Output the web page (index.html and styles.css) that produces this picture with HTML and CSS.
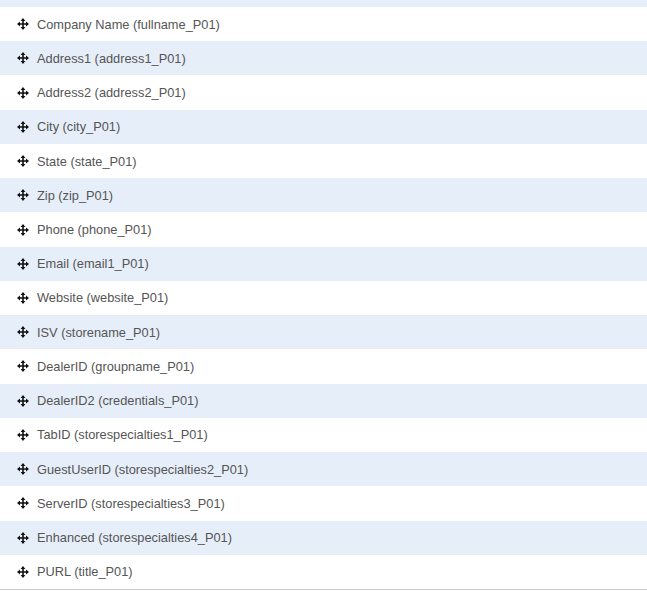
FILE: index.html
```html
<!DOCTYPE html>
<html>
<head>
<meta charset="utf-8">
<link rel="stylesheet" href="styles.css">
</head>
<body>
<div class="list">
  <div class="strip"></div>
  <div class="row"><svg class="ico" viewBox="0 0 12 12"><path d="M6 0L8.4 3H6.8V5.2H9V3.6L12 6L9 8.4V6.8H6.8V9H8.4L6 12L3.6 9H5.2V6.8H3V8.4L0 6L3 3.6V5.2H5.2V3H3.6Z"/></svg><span>Company Name (fullname_P01)</span></div>
  <div class="row"><svg class="ico" viewBox="0 0 12 12"><path d="M6 0L8.4 3H6.8V5.2H9V3.6L12 6L9 8.4V6.8H6.8V9H8.4L6 12L3.6 9H5.2V6.8H3V8.4L0 6L3 3.6V5.2H5.2V3H3.6Z"/></svg><span>Address1 (address1_P01)</span></div>
  <div class="row"><svg class="ico" viewBox="0 0 12 12"><path d="M6 0L8.4 3H6.8V5.2H9V3.6L12 6L9 8.4V6.8H6.8V9H8.4L6 12L3.6 9H5.2V6.8H3V8.4L0 6L3 3.6V5.2H5.2V3H3.6Z"/></svg><span>Address2 (address2_P01)</span></div>
  <div class="row"><svg class="ico" viewBox="0 0 12 12"><path d="M6 0L8.4 3H6.8V5.2H9V3.6L12 6L9 8.4V6.8H6.8V9H8.4L6 12L3.6 9H5.2V6.8H3V8.4L0 6L3 3.6V5.2H5.2V3H3.6Z"/></svg><span>City (city_P01)</span></div>
  <div class="row"><svg class="ico" viewBox="0 0 12 12"><path d="M6 0L8.4 3H6.8V5.2H9V3.6L12 6L9 8.4V6.8H6.8V9H8.4L6 12L3.6 9H5.2V6.8H3V8.4L0 6L3 3.6V5.2H5.2V3H3.6Z"/></svg><span>State (state_P01)</span></div>
  <div class="row"><svg class="ico" viewBox="0 0 12 12"><path d="M6 0L8.4 3H6.8V5.2H9V3.6L12 6L9 8.4V6.8H6.8V9H8.4L6 12L3.6 9H5.2V6.8H3V8.4L0 6L3 3.6V5.2H5.2V3H3.6Z"/></svg><span>Zip (zip_P01)</span></div>
  <div class="row"><svg class="ico" viewBox="0 0 12 12"><path d="M6 0L8.4 3H6.8V5.2H9V3.6L12 6L9 8.4V6.8H6.8V9H8.4L6 12L3.6 9H5.2V6.8H3V8.4L0 6L3 3.6V5.2H5.2V3H3.6Z"/></svg><span>Phone (phone_P01)</span></div>
  <div class="row"><svg class="ico" viewBox="0 0 12 12"><path d="M6 0L8.4 3H6.8V5.2H9V3.6L12 6L9 8.4V6.8H6.8V9H8.4L6 12L3.6 9H5.2V6.8H3V8.4L0 6L3 3.6V5.2H5.2V3H3.6Z"/></svg><span>Email (email1_P01)</span></div>
  <div class="row"><svg class="ico" viewBox="0 0 12 12"><path d="M6 0L8.4 3H6.8V5.2H9V3.6L12 6L9 8.4V6.8H6.8V9H8.4L6 12L3.6 9H5.2V6.8H3V8.4L0 6L3 3.6V5.2H5.2V3H3.6Z"/></svg><span>Website (website_P01)</span></div>
  <div class="row"><svg class="ico" viewBox="0 0 12 12"><path d="M6 0L8.4 3H6.8V5.2H9V3.6L12 6L9 8.4V6.8H6.8V9H8.4L6 12L3.6 9H5.2V6.8H3V8.4L0 6L3 3.6V5.2H5.2V3H3.6Z"/></svg><span>ISV (storename_P01)</span></div>
  <div class="row"><svg class="ico" viewBox="0 0 12 12"><path d="M6 0L8.4 3H6.8V5.2H9V3.6L12 6L9 8.4V6.8H6.8V9H8.4L6 12L3.6 9H5.2V6.8H3V8.4L0 6L3 3.6V5.2H5.2V3H3.6Z"/></svg><span>DealerID (groupname_P01)</span></div>
  <div class="row"><svg class="ico" viewBox="0 0 12 12"><path d="M6 0L8.4 3H6.8V5.2H9V3.6L12 6L9 8.4V6.8H6.8V9H8.4L6 12L3.6 9H5.2V6.8H3V8.4L0 6L3 3.6V5.2H5.2V3H3.6Z"/></svg><span>DealerID2 (credentials_P01)</span></div>
  <div class="row"><svg class="ico" viewBox="0 0 12 12"><path d="M6 0L8.4 3H6.8V5.2H9V3.6L12 6L9 8.4V6.8H6.8V9H8.4L6 12L3.6 9H5.2V6.8H3V8.4L0 6L3 3.6V5.2H5.2V3H3.6Z"/></svg><span>TabID (storespecialties1_P01)</span></div>
  <div class="row"><svg class="ico" viewBox="0 0 12 12"><path d="M6 0L8.4 3H6.8V5.2H9V3.6L12 6L9 8.4V6.8H6.8V9H8.4L6 12L3.6 9H5.2V6.8H3V8.4L0 6L3 3.6V5.2H5.2V3H3.6Z"/></svg><span>GuestUserID (storespecialties2_P01)</span></div>
  <div class="row"><svg class="ico" viewBox="0 0 12 12"><path d="M6 0L8.4 3H6.8V5.2H9V3.6L12 6L9 8.4V6.8H6.8V9H8.4L6 12L3.6 9H5.2V6.8H3V8.4L0 6L3 3.6V5.2H5.2V3H3.6Z"/></svg><span>ServerID (storespecialties3_P01)</span></div>
  <div class="row"><svg class="ico" viewBox="0 0 12 12"><path d="M6 0L8.4 3H6.8V5.2H9V3.6L12 6L9 8.4V6.8H6.8V9H8.4L6 12L3.6 9H5.2V6.8H3V8.4L0 6L3 3.6V5.2H5.2V3H3.6Z"/></svg><span>Enhanced (storespecialties4_P01)</span></div>
  <div class="row"><svg class="ico" viewBox="0 0 12 12"><path d="M6 0L8.4 3H6.8V5.2H9V3.6L12 6L9 8.4V6.8H6.8V9H8.4L6 12L3.6 9H5.2V6.8H3V8.4L0 6L3 3.6V5.2H5.2V3H3.6Z"/></svg><span>PURL (title_P01)</span></div>
</div>
</body>
</html>
```
FILE: styles.css
```css
html, body {
  margin: 0;
  padding: 0;
  background: #ffffff;
}
.list {
  display: flex;
  flex-direction: column;
  border-bottom: 1px solid #cccccc;
  font-family: "Liberation Sans", Arial, sans-serif;
  font-size: 12.8px;
  color: #555555;
}
.strip {
  height: 7px;
  background: #e5eef9;
}
.row {
  height: 34.24px;
  display: flex;
  align-items: center;
  gap: 8px;
  padding-left: 17px;
  box-sizing: border-box;
}
.row:nth-child(odd) {
  background: #e5eef9;
}
.ico {
  width: 12px;
  height: 12px;
  fill: #111111;
  flex: none;
}
```
